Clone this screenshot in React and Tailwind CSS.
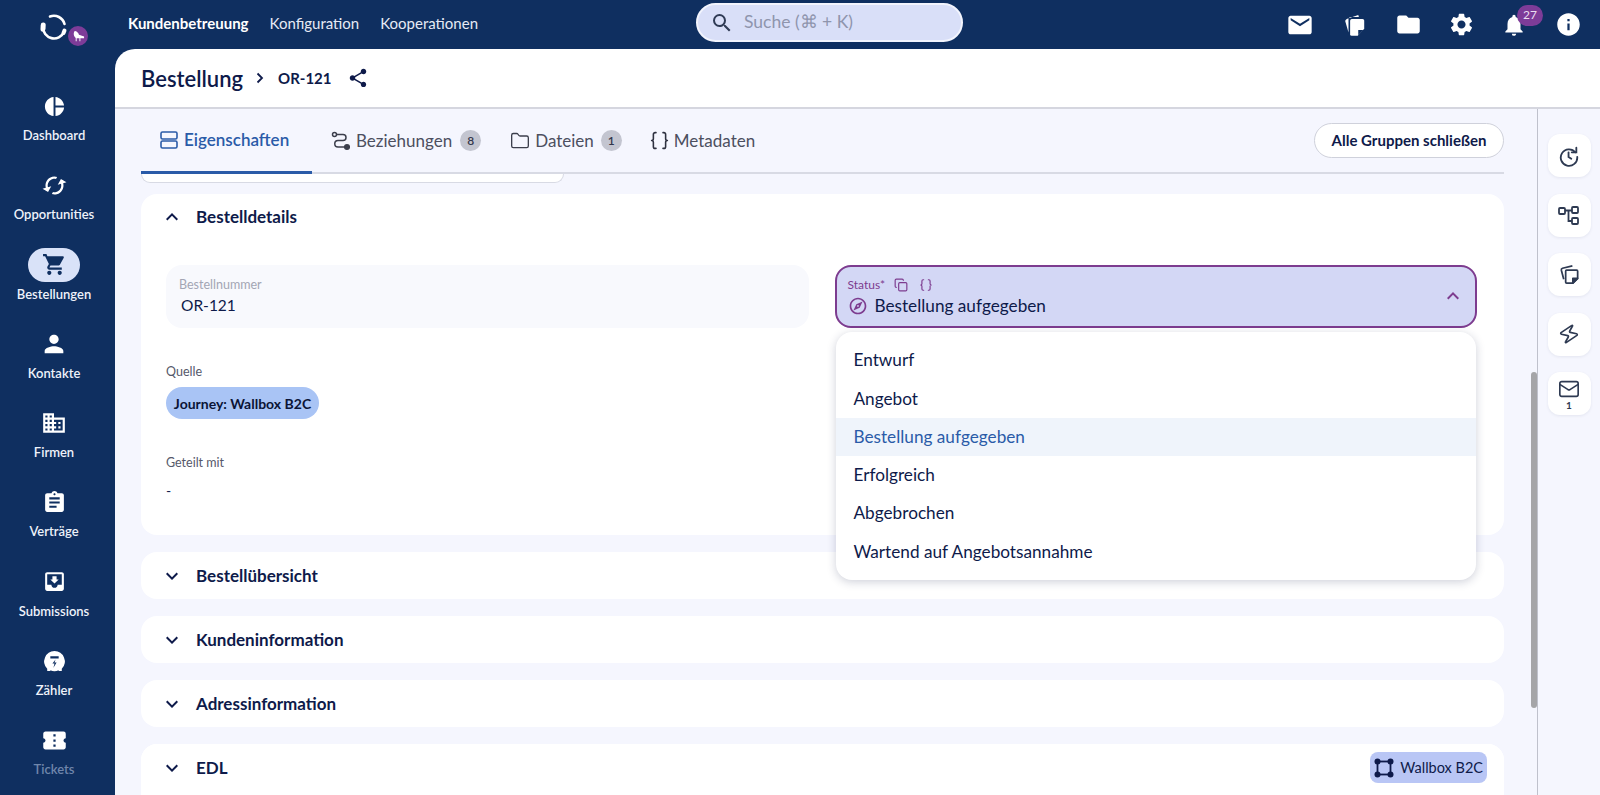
import { Braces, Copy, Folder, Mail, Zap } from "lucide-react";
import {
  MdAssignment,
  MdConfirmationNumber,
  MdDomain,
  MdEmail,
  MdExpandLess,
  MdExpandMore,
  MdFolder,
  MdInfo,
  MdMoveToInbox,
  MdNotifications,
  MdOutlineExplore,
  MdPerson,
  MdPieChart,
  MdSearch,
  MdSettings,
  MdShare,
  MdShoppingCart,
  MdSync,
} from "react-icons/md";

const LogoMark = () => (
  <svg width="30" height="30" viewBox="0 0 30 30" fill="none" stroke="white" strokeLinecap="round">
    <path d="M11 4.500A11 11 0 0 1 25.500 12" strokeWidth="2.600" />
    <path d="M4 15A11 11 0 0 0 25 20" strokeWidth="2.600" />
    <path d="M4.200 13 4 17" strokeWidth="5" />
    <path d="M25.500 18.500 24.500 21" strokeWidth="4" />
  </svg>
);

const MeterIcon = ({ size = 24 }) => (
  <svg width={size} height={size} viewBox="0 0 24 24">
    <path
      fill="white"
      fillRule="evenodd"
      d="M12 2a10 10 0 0 1 7 17v2h-3v-.6a10 10 0 0 1-8 0v.6H5v-2A10 10 0 0 1 12 2zM8 7v2h8V7zm5 3l-3 4h2l-1 4 3-5h-2l1-3z"
    />
  </svg>
);

const CopyFilled = () => (
  <svg width="26" height="26" viewBox="0 0 24 24" fill="white">
    <path d="M5.500 6 15 2.800l.6 1.700H8C6.900 4.500 6 5.400 6 6.500V19L3 8.500C2.800 7.500 4 6.500 5.500 6z" />
    <path d="M9 6.500h10a1.500 1.500 0 0 1 1.500 1.500v7.500l-6 6.500H9A1.500 1.500 0 0 1 7.500 20.500V8A1.500 1.500 0 0 1 9 6.500z" />
    <path d="M15 21.500v-5h4.800z" fill="#0f2f60" />
  </svg>
);

const SheetsIcon = () => (
  <svg width="23" height="23" viewBox="0 0 24 24" fill="none" stroke="#2e3a52" strokeWidth="1.800" strokeLinejoin="round">
    <path d="M6 17 3.500 7.500C3.300 6.500 3.800 5.800 4.700 5.500L15 3" />
    <path d="M9 7.500h10.500a1 1 0 0 1 1 1V16l-5 5H9a1 1 0 0 1-1-1V8.500a1 1 0 0 1 1-1z" />
    <path d="M15.500 21v-5h5z" fill="#2e3a52" />
  </svg>
);

const RowsIcon = () => (
  <svg width="18" height="18" viewBox="0 0 18 18" fill="none" stroke="#2a5ba8" strokeWidth="1.600">
    <rect x="1" y="1" width="16" height="7" rx="1.500" />
    <rect x="1" y="10" width="16" height="7" rx="1.500" />
  </svg>
);

const RouteIcon = () => (
  <svg width="20" height="20" viewBox="0 0 20 20" fill="none" stroke="#3c3f4c" strokeWidth="1.500">
    <circle cx="3.500" cy="3.500" r="2" />
    <path d="M5.500 3.500H12a3 3 0 0 1 0 6H7a3 3 0 0 0 0 6.500h8" />
    <circle cx="16" cy="16" r="2.300" fill="#3c3f4c" />
  </svg>
);

const HistoryIcon = () => (
  <svg width="22" height="22" viewBox="0 0 24 24" fill="none" stroke="#2e3a52" strokeWidth="2" strokeLinecap="round">
    <path d="M19 8A9 9 0 1 0 21 13" />
    <path d="M20 3v5h-5" />
    <path d="M11.500 8v5l3 2" />
  </svg>
);

const TreeIcon = () => (
  <svg width="22" height="22" viewBox="0 0 22 22" fill="none" stroke="#2e3a52" strokeWidth="1.800">
    <rect x="1" y="4" width="6" height="6" rx="1" />
    <rect x="14" y="3" width="6" height="6" rx="1" />
    <rect x="14" y="14" width="6" height="6" rx="1" />
    <path d="M7 6.500h7M10.500 6.500V17H14" />
  </svg>
);

const NodesIcon = () => (
  <svg width="20" height="20" viewBox="0 0 20 20" fill="none" stroke="#0e1a4a" strokeWidth="1.800">
    <rect x="3.500" y="3.500" width="13" height="13" />
    <g fill="#0e1a4a" stroke="none">
      <circle cx="3.500" cy="3.500" r="3" />
      <circle cx="16.500" cy="3.500" r="3" />
      <circle cx="3.500" cy="16.500" r="3" />
      <circle cx="16.500" cy="16.500" r="3" />
    </g>
  </svg>
);

const navItems = [
  { label: "Dashboard", icon: <MdPieChart size={23} /> },
  { label: "Opportunities", icon: <MdSync size={27} className="rotate-[75deg]" /> },
  { label: "Bestellungen", icon: <MdShoppingCart size={25} />, active: true },
  { label: "Kontakte", icon: <MdPerson size={28} /> },
  { label: "Firmen", icon: <MdDomain size={26} /> },
  { label: "Verträge", icon: <MdAssignment size={25} /> },
  { label: "Submissions", icon: <MdMoveToInbox size={25} /> },
  { label: "Zähler", icon: <MeterIcon size={25} /> },
  { label: "Tickets", icon: <MdConfirmationNumber size={27} />, muted: true },
];

const statusOptions = [
  "Entwurf",
  "Angebot",
  "Bestellung aufgegeben",
  "Erfolgreich",
  "Abgebrochen",
  "Wartend auf Angebotsannahme",
];

function TopBar() {
  return (
    <div className="flex h-[49px] shrink-0 items-center bg-[#0f2f60] text-white">
      <div className="relative flex w-[128px] shrink-0 justify-start pl-[39px] pt-[5px]">
        <LogoMark />
        <div className="absolute left-[68px] top-[19px] flex h-[20px] w-[20px] items-center justify-center rounded-full bg-[#7d3c98]">
          <svg width="13" height="13" viewBox="0 0 14 14" fill="white">
            <path d="M3 1c2 0 4 2 4.500 4L13 7v2H9v3H8V9H5v3H4V8.500C2 7 1 3 3 1z" />
          </svg>
        </div>
      </div>
      <div className="mt-[-2px] flex items-center text-[15px]">
        <span className="font-bold">Kundenbetreuung</span>
        <span className="ml-[21px] text-[#e6eaf5]">Konfiguration</span>
        <span className="ml-[21px] text-[#e6eaf5]">Kooperationen</span>
      </div>
      <div className="absolute left-[696px] top-[3px] flex h-[39px] w-[267px] items-center rounded-full border-2 border-[#f2f4fd] bg-[#d9dff8] pl-[12px]">
        <MdSearch size={24} className="text-[#2f3b55]" />
        <span className="ml-[10px] text-[17.500px] text-[#8f95ad]">Suche (⌘ + K)</span>
      </div>
      <div className="relative ml-auto flex items-center pr-[18px]">
        <MdEmail size={28} />
        <div className="ml-[28px]"><CopyFilled /></div>
        <MdFolder size={27} className="ml-[27px]" />
        <MdSettings size={27} className="ml-[26px]" />
        <div className="relative ml-[26px]">
          <MdNotifications size={26} />
          <span className="absolute left-[16px] top-[-7px] flex h-[21px] w-[26px] items-center justify-center rounded-full bg-[#7d3c98] text-[12px] text-[#e9dff0]">27</span>
        </div>
        <MdInfo size={27} className="ml-[28px]" />
      </div>
    </div>
  );
}

function Sidebar() {
  return (
    <div className="flex h-full w-[115px] shrink-0 flex-col bg-[#0f2f60] pr-[7px] pt-[40px]">
      {navItems.map((item) => (
        <div key={item.label} className="flex h-[79.300px] shrink-0 flex-col items-center">
          <div
            className={
              item.active
                ? "flex h-[34px] w-[52px] items-center justify-center rounded-full bg-[#d9e2f8] text-[#0f2f60]"
                : "flex h-[34px] w-[52px] items-center justify-center text-white"
            }
          >
            {item.icon}
          </div>
          <span className={item.muted ? "mt-[3px] text-[13px] font-semibold text-[#6f86ab]" : "mt-[3px] text-[13px] font-semibold text-[#eef2fa]"}>
            {item.label}
          </span>
        </div>
      ))}
    </div>
  );
}

function Tabs() {
  return (
    <div className="flex h-[65px] shrink-0 items-center justify-between border-b-2 border-[#d8dae4]">
      <div className="flex h-full items-center text-[17px] text-[#4c4f60]">
        <div className="mb-[-2px] flex h-[65px] w-[171px] items-center border-b-[3px] border-[#2a5ba8] pl-[19px] font-semibold text-[#2a5ba8]">
          <RowsIcon />
          <span className="ml-[6px]">Eigenschaften</span>
        </div>
        <div className="ml-[19px] flex items-center">
          <RouteIcon />
          <span className="ml-[5px]">Beziehungen</span>
          <span className="ml-[8px] flex h-[21px] w-[21px] items-center justify-center rounded-full bg-[#c3c5d0] text-[12px] font-semibold text-[#33364a]">8</span>
        </div>
        <div className="ml-[29px] flex items-center">
          <Folder size={20} strokeWidth={1.6} className="text-[#3c3f4c]" />
          <span className="ml-[5px]">Dateien</span>
          <span className="ml-[7px] flex h-[21px] w-[21px] items-center justify-center rounded-full bg-[#c3c5d0] text-[12px] font-semibold text-[#33364a]">1</span>
        </div>
        <div className="ml-[27px] flex items-center">
          <Braces size={21} strokeWidth={1.8} className="text-[#2e3140]" />
          <span className="ml-[4px]">Metadaten</span>
        </div>
      </div>
      <button className="h-[35px] w-[190px] rounded-full border border-[#cfd1db] bg-white text-[15px] font-bold text-[#0e1a4a]">
        Alle Gruppen schließen
      </button>
    </div>
  );
}

function CollapsedCard({ title, chip }) {
  return (
    <div className="flex h-[47px] shrink-0 items-center rounded-2xl bg-white pl-[19px] pr-[17px]">
      <MdExpandMore size={24} className="text-[#0e1a4a]" />
      <span className="ml-[12px] text-[17px] font-bold text-[#0e1a4a]">{title}</span>
      {chip && (
        <span className="ml-auto flex h-[31px] items-center gap-[6px] rounded-lg bg-[#b9c6f5] px-[4px] text-[14.500px] text-[#0e1a4a]">
          <NodesIcon />
          {chip}
        </span>
      )}
    </div>
  );
}

function StatusSelect() {
  return (
    <div className="relative">
      <div className="flex h-[63px] items-start justify-between rounded-2xl border-2 border-[#7d3c8f] bg-[#d3d7f5] pl-[11px] pr-[10px]">
        <div>
          <div className="mt-[11px] flex h-[14px] items-center text-[12px] text-[#7d3c8f]">
            Status*
            <Copy size={14} className="ml-[9px]" />
            <Braces size={14} className="ml-[11px]" />
          </div>
          <div className="mt-[1px] flex items-center text-[17.200px] text-[#0e1a4a]">
            <MdOutlineExplore size={20} className="text-[#7d3c8f]" />
            <span className="ml-[7px]">Bestellung aufgegeben</span>
          </div>
        </div>
        <MdExpandLess size={24} className="mt-[17px] text-[#7d3c8f]" />
      </div>
      <div className="absolute left-[1px] right-[1px] top-[67px] z-10 rounded-2xl bg-white py-[9px] shadow-[0_2px_10px_rgba(30,40,80,0.22)]">
        {statusOptions.map((opt) => (
          <div
            key={opt}
            className={
              opt === "Bestellung aufgegeben"
                ? "flex h-[38.300px] items-center bg-[#eff4fb] pl-[18px] text-[17.200px] text-[#2a5ba8]"
                : "flex h-[38.300px] items-center pl-[18px] text-[17.200px] text-[#0e1a4a]"
            }
          >
            {opt}
          </div>
        ))}
      </div>
    </div>
  );
}

function OrderDetails() {
  return (
    <div className="h-[341px] shrink-0 rounded-2xl bg-white pl-[25px] pr-[27px]">
      <div className="ml-[-6px] flex h-[46px] items-center">
        <MdExpandLess size={24} className="text-[#0e1a4a]" />
        <span className="ml-[12px] text-[17px] font-bold text-[#0e1a4a]">Bestelldetails</span>
      </div>
      <div className="mt-[25px] grid grid-cols-2 gap-x-[26px]">
        <div className="h-[63px] rounded-2xl bg-[#f8f9fd] pl-[13px]">
          <div className="pt-[12px] text-[12.500px] leading-[16px] text-[#a3a6b4]">Bestellnummer</div>
          <div className="ml-[2px] mt-[1px] text-[15.500px] text-[#0e1a4a]">OR-121</div>
        </div>
        <StatusSelect />
      </div>
      <div className="mt-[36px] text-[12.500px] leading-[16px] text-[#55586a]">Quelle</div>
      <div className="mt-[7px] flex h-[32px] w-[153px] items-center justify-center rounded-full bg-[#a9c4f5] text-[14px] font-bold text-[#0b1436]">
        Journey: Wallbox B2C
      </div>
      <div className="mt-[36px] text-[12.500px] leading-[16px] text-[#55586a]">Geteilt mit</div>
      <div className="mt-[9px] text-[14px] text-[#0e1a4a]">-</div>
    </div>
  );
}

function RightRail() {
  const buttons = [
    <HistoryIcon key="h" />,
    <TreeIcon key="t" />,
    <SheetsIcon key="c" />,
    <Zap key="z" size={22} strokeWidth={1.8} className="rotate-12 text-[#2e3a52]" />,
  ];
  return (
    <div className="flex w-[63px] shrink-0 flex-col items-center gap-[16.500px] border-l border-[#bfc1cc] bg-[#f5f6fe] pt-[25px]">
      {buttons.map((icon) => (
        <div key={icon.key} className="flex h-[43px] w-[43px] items-center justify-center rounded-xl bg-white shadow-[0_1px_3px_rgba(30,40,80,0.08)]">
          {icon}
        </div>
      ))}
      <div className="flex h-[43px] w-[43px] flex-col items-center justify-center rounded-xl bg-white shadow-[0_1px_3px_rgba(30,40,80,0.08)]">
        <Mail size={22} strokeWidth={1.8} className="text-[#2e3a52]" />
        <span className="text-[10px] font-bold leading-[10px] text-[#2e3a52]">1</span>
      </div>
    </div>
  );
}

export default function App() {
  return (
    <div className="relative flex h-[795px] w-[1600px] flex-col overflow-hidden bg-[#0f2f60] font-['Lato',sans-serif]">
      <TopBar />
      <div className="flex min-h-0 flex-1">
        <Sidebar />
        <div className="flex min-w-0 flex-1 flex-col overflow-hidden rounded-tl-[20px] bg-white">
          <div className="flex h-[60px] shrink-0 items-center border-b-2 border-[#d5d6df] pl-[26px]">
            <span className="text-[22px] font-semibold text-[#0e1a4a]">Bestellung</span>
            <svg width="10" height="12" viewBox="0 0 10 12" fill="none" stroke="#0e1a4a" strokeWidth="1.800" className="ml-[12px]">
              <path d="M2.500 1.500 7 6l-4.500 4.500" />
            </svg>
            <span className="ml-[13px] text-[15px] font-bold text-[#0e1a4a]">OR-121</span>
            <MdShare size={22} className="ml-[15px] text-[#0e1a4a]" />
          </div>
          <div className="flex min-h-0 flex-1">
            <div className="relative flex min-w-0 flex-1 flex-col bg-[#f5f6fe] pl-[26px] pr-[33px]">
              <Tabs />
              <div className="h-[9px] w-[423px] shrink-0 rounded-b-2xl border border-t-0 border-[#d8dae4] bg-white" />
              <div className="mt-[11px] flex flex-col gap-[17px]">
                <OrderDetails />
                <CollapsedCard title="Bestellübersicht" />
                <CollapsedCard title="Kundeninformation" />
                <CollapsedCard title="Adressinformation" />
                <div className="h-[60px] shrink-0 rounded-t-2xl bg-white">
                  <CollapsedCard title="EDL" chip="Wallbox B2C" />
                </div>
              </div>
              <div className="absolute right-0 top-[263px] h-[336px] w-[6px] rounded-full bg-[#a5a5a8]" />
            </div>
            <RightRail />
          </div>
        </div>
      </div>
    </div>
  );
}
